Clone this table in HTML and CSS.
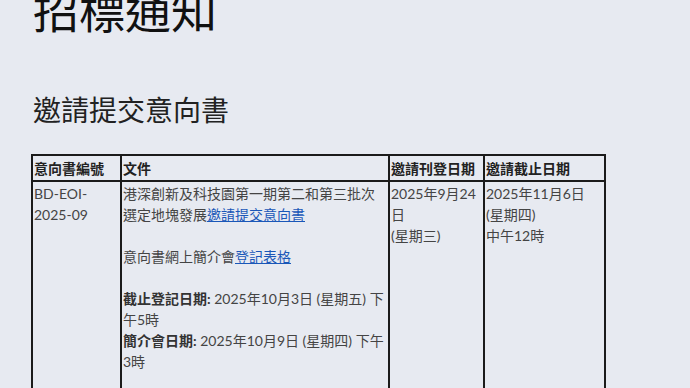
FILE: index.html
```html
<!DOCTYPE html>
<html lang="zh-HK">

<head>
    <meta charset="UTF-8">
    <meta name="viewport" content="width=device-width, initial-scale=1.0">
    <title>招標通知</title>
    <link rel="stylesheet" href="styles.css">
</head>

<body>
    <div class="page">
        <h1 class="page-title">招標通知</h1>

        <h2 class="section-title">邀請提交意向書</h2>

        <table class="notice-table">
            <thead>
                <tr>
                    <th class="col-ref">意向書編號</th>
                    <th class="col-doc">文件</th>
                    <th class="col-issue">邀請刊登日期</th>
                    <th class="col-close">邀請截止日期</th>
                </tr>
            </thead>
            <tbody>
                <tr>
                    <td>BD-EOI-2025-09</td>
                    <td>
                        港深創新及科技園第一期第二和第三批次選定地塊發展<a href="#">邀請提交意向書</a>
                        <br><br>
                        意向書網上簡介會<a href="#">登記表格</a>
                        <br><br>
                        <strong>截止登記日期:</strong> 2025年10月3日 (星期五) 下午5時
                        <br>
                        <strong>簡介會日期:</strong> 2025年10月9日 (星期四) 下午3時
                        <br><br><br>
                    </td>
                    <td>2025年9月24日<br>(星期三)</td>
                    <td>2025年11月6日<br>(星期四)<br>中午12時</td>
                </tr>
            </tbody>
        </table>
    </div>
</body>

</html>
```

FILE: styles.css
```css
/* General Styles */
body {
    margin: 0;
    background-color: #e7eaf1;
    font-family: "Open Sans", "Noto Sans CJK TC", sans-serif;
    color: #444;
}

.page {
    padding: 0 33px;
}

.page-title {
    margin: -20px 0 0;
    font-size: 46px;
    font-weight: 400;
    line-height: 60px;
    color: #111;
}

.section-title {
    margin: 50px 0 24px;
    font-size: 28px;
    font-weight: 400;
    line-height: 40px;
    color: #222;
}

/* Notice table */
.notice-table {
    margin-left: -2px;
    border-collapse: collapse;
    font-family: "Lato", "Noto Sans CJK TC", sans-serif;
    font-size: 14px;
    line-height: 21px;
}

.notice-table th,
.notice-table td {
    border: 2px solid #1b1b1b;
    padding: 1px;
    text-align: left;
    vertical-align: top;
}

.notice-table th {
    padding-top: 2px;
    font-weight: 700;
    color: #222;
}

.col-ref {
    width: 85px;
}

.col-doc {
    width: 264px;
}

.col-issue {
    width: 91px;
}

.col-close {
    width: 117px;
}

.notice-table a {
    color: #1a57b8;
}

.notice-table strong {
    color: #333;
}
```
